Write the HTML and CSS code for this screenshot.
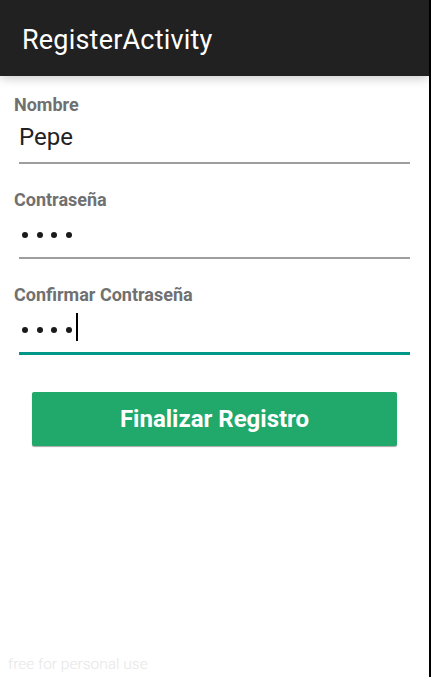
FILE: index.html
```html
<!DOCTYPE html>
<html>
<head>
<meta charset="utf-8">
<link rel="stylesheet" href="styles.css">
</head>
<body>
<div class="screen">
  <div class="app">
    <header class="bar"><span class="title">RegisterActivity</span></header>
    <main class="form">
      <div class="field">
        <div class="label">Nombre</div>
        <div class="input"><span class="value">Pepe</span></div>
      </div>
      <div class="field">
        <div class="label">Contraseña</div>
        <div class="input"><span class="dots"><i></i><i></i><i></i><i></i></span></div>
      </div>
      <div class="field">
        <div class="label">Confirmar Contraseña</div>
        <div class="input focused"><span class="dots"><i></i><i></i><i></i><i></i></span><span class="caret"></span></div>
      </div>
      <div class="btnwrap"><button class="btn">Finalizar Registro</button></div>
    </main>
    <div class="watermark">free for personal use</div>
  </div>
  <div class="edge"></div>
</div>
</body>
</html>
```
FILE: styles.css
```css
html, body { margin: 0; padding: 0; }
body { width: 431px; height: 677px; overflow: hidden; font-family: Roboto, "Liberation Sans", sans-serif; }
.screen { display: flex; width: 431px; height: 677px; }
.app { flex: 1; display: flex; flex-direction: column; background: #fff; position: relative; }
.edge { width: 2px; background: #000; }
.bar { height: 76px; flex: none; background: #212121; display: flex; align-items: center; padding: 3px 0 0 22px; box-shadow: 0 2px 10px rgba(0,0,0,0.22); position: relative; z-index: 1; box-sizing: border-box; }
.title { color: #fff; font-size: 27px; letter-spacing: 0.2px; }
.form { flex: 1; padding: 18px 19px 0 14px; }
.field { display: flex; flex-direction: column; }
.field + .field { margin-top: 25px; }
.label { font-size: 18px; font-weight: bold; color: #707070; height: 22px; line-height: 22px; }
.input { margin-left: 5px; height: 48px; border-bottom: 2px solid #9e9e9e; box-sizing: border-box; display: flex; align-items: flex-start; padding-top: 7px; }
.input.focused { border-bottom: 3px solid #009688; height: 49px; }
.value { font-size: 24px; line-height: 28px; color: #222; }
.dots { display: flex; gap: 8.5px; padding: 14px 0 0 3px; }
.dots i { width: 6px; height: 6px; border-radius: 50%; background: #1a1a1a; display: block; }
.caret { width: 2px; height: 28px; background: #000; margin: 0 0 0 4px; }
.btnwrap { padding: 37px 13px 0 18px; }
.btn { width: 100%; height: 54px; background: #21a86b; border: none; border-radius: 2px; box-shadow: 0 1px 1px rgba(0,0,0,0.35); color: #fff; font-family: Roboto, "Liberation Sans", sans-serif; font-weight: bold; font-size: 24px; display: block; padding: 0; }
.watermark { position: absolute; left: 8px; bottom: 4px; font-size: 15.5px; color: #e6e6e6; font-weight: 300; }
```
